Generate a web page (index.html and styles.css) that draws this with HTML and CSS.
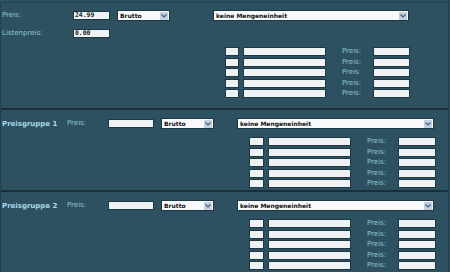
FILE: index.html
```html
<!DOCTYPE html>
<html>
<head>
<meta charset="utf-8">
<link rel="stylesheet" href="styles.css">
</head>
<body>
<div class="frame">
  <div class="section main">
    <div class="left">
      <div class="row r1">
        <span class="label lw-main">Preis:</span>
        <div class="inp w37"><span class="val">24.99</span></div>
        <div class="sel w53"><span class="stext">Brutto</span><span class="arrow"><svg width="6" height="4" viewBox="0 0 6 4"><path d="M0.5 0.5 L3 3 L5.5 0.5" fill="none" stroke="#3d5f86" stroke-width="1.2"/></svg></span></div>
      </div>
      <div class="row r2">
        <span class="label lw-main">Listenpreis:</span>
        <div class="inp w37"><span class="val">0.00</span></div>
      </div>
    </div>
    <div class="right">
      <div class="sel w196"><span class="stext">keine Mengeneinheit</span><span class="arrow"><svg width="6" height="4" viewBox="0 0 6 4"><path d="M0.5 0.5 L3 3 L5.5 0.5" fill="none" stroke="#3d5f86" stroke-width="1.2"/></svg></span></div>
      <div class="rows mt26">
        <div class="prow"><div class="inp s14"></div><div class="inp l83"></div><span class="label plabel">Preis:</span><div class="inp w37"></div></div>
        <div class="prow"><div class="inp s14"></div><div class="inp l83"></div><span class="label plabel">Preis:</span><div class="inp w37"></div></div>
        <div class="prow"><div class="inp s14"></div><div class="inp l83"></div><span class="label plabel">Preis:</span><div class="inp w37"></div></div>
        <div class="prow"><div class="inp s14"></div><div class="inp l83"></div><span class="label plabel">Preis:</span><div class="inp w37"></div></div>
        <div class="prow"><div class="inp s14"></div><div class="inp l83"></div><span class="label plabel">Preis:</span><div class="inp w37"></div></div>
      </div>
    </div>
  </div>
  <div class="sep"></div>
  <div class="section group">
    <div class="left gleft">
      <div class="row r1">
        <span class="title">Preisgruppe 1</span>
        <span class="label lw-grp">Preis:</span>
        <div class="inp w46"></div>
        <div class="sel w53"><span class="stext">Brutto</span><span class="arrow"><svg width="6" height="4" viewBox="0 0 6 4"><path d="M0.5 0.5 L3 3 L5.5 0.5" fill="none" stroke="#3d5f86" stroke-width="1.2"/></svg></span></div>
      </div>
    </div>
    <div class="right">
      <div class="sel w197"><span class="stext">keine Mengeneinheit</span><span class="arrow"><svg width="6" height="4" viewBox="0 0 6 4"><path d="M0.5 0.5 L3 3 L5.5 0.5" fill="none" stroke="#3d5f86" stroke-width="1.2"/></svg></span></div>
      <div class="rows mt8">
        <div class="prow"><div class="inp s15"></div><div class="inp l83"></div><span class="label plabel">Preis:</span><div class="inp w38"></div></div>
        <div class="prow"><div class="inp s15"></div><div class="inp l83"></div><span class="label plabel">Preis:</span><div class="inp w38"></div></div>
        <div class="prow"><div class="inp s15"></div><div class="inp l83"></div><span class="label plabel">Preis:</span><div class="inp w38"></div></div>
        <div class="prow"><div class="inp s15"></div><div class="inp l83"></div><span class="label plabel">Preis:</span><div class="inp w38"></div></div>
        <div class="prow"><div class="inp s15"></div><div class="inp l83"></div><span class="label plabel">Preis:</span><div class="inp w38"></div></div>
      </div>
    </div>
  </div>
  <div class="sep"></div>
  <div class="section group">
    <div class="left gleft">
      <div class="row r1">
        <span class="title">Preisgruppe 2</span>
        <span class="label lw-grp">Preis:</span>
        <div class="inp w46"></div>
        <div class="sel w53"><span class="stext">Brutto</span><span class="arrow"><svg width="6" height="4" viewBox="0 0 6 4"><path d="M0.5 0.5 L3 3 L5.5 0.5" fill="none" stroke="#3d5f86" stroke-width="1.2"/></svg></span></div>
      </div>
    </div>
    <div class="right">
      <div class="sel w197"><span class="stext">keine Mengeneinheit</span><span class="arrow"><svg width="6" height="4" viewBox="0 0 6 4"><path d="M0.5 0.5 L3 3 L5.5 0.5" fill="none" stroke="#3d5f86" stroke-width="1.2"/></svg></span></div>
      <div class="rows mt8">
        <div class="prow"><div class="inp s15"></div><div class="inp l83"></div><span class="label plabel">Preis:</span><div class="inp w38"></div></div>
        <div class="prow"><div class="inp s15"></div><div class="inp l83"></div><span class="label plabel">Preis:</span><div class="inp w38"></div></div>
        <div class="prow"><div class="inp s15"></div><div class="inp l83"></div><span class="label plabel">Preis:</span><div class="inp w38"></div></div>
        <div class="prow"><div class="inp s15"></div><div class="inp l83"></div><span class="label plabel">Preis:</span><div class="inp w38"></div></div>
        <div class="prow"><div class="inp s15"></div><div class="inp l83"></div><span class="label plabel">Preis:</span><div class="inp w38"></div></div>
      </div>
    </div>
  </div>
</div>
</body>
</html>
```
FILE: styles.css
```css
html, body {
  margin: 0;
  padding: 0;
}
body {
  background: #2e5162;
  font-family: "DejaVu Sans", Verdana, sans-serif;
  width: 450px;
  height: 272px;
  overflow: hidden;
}
.frame {
  margin-top: 2px;
  width: 449px;
  box-sizing: border-box;
  border-top: 1px dotted #1b3240;
  border-left: 1px dotted #1b3240;
  border-right: 1px dotted #1b3240;
}
.section {
  display: flex;
  align-items: flex-start;
  box-sizing: border-box;
}
.main {
  height: 105px;
  padding-top: 7px;
}
.group {
  height: 80px;
  padding-top: 8px;
}
.sep {
  height: 2px;
  background: #1a2f3b;
}
.left {
  width: 212px;
  display: flex;
  flex-direction: column;
}
.gleft {
  width: 236px;
}
.row {
  display: flex;
  align-items: center;
}
.r1 {
  height: 11px;
}
.r2 {
  height: 9px;
  margin-top: 8px;
}
.label {
  font-size: 7px;
  color: #8fc6d1;
  line-height: 9px;
  white-space: nowrap;
}
.lw-main {
  width: 71px;
  padding-left: 1px;
}
.lw-grp {
  width: 41px;
}
.title {
  width: 65px;
  padding-left: 1px;
  font-size: 7px;
  font-weight: bold;
  color: #a4dce7;
  white-space: nowrap;
}
.inp {
  box-sizing: border-box;
  height: 9px;
  background: #eef2f3;
  border: 1px solid #1d3744;
  display: flex;
  align-items: center;
}
.val {
  font-family: "DejaVu Sans Mono", monospace;
  font-weight: bold;
  font-size: 6.4px;
  color: #101820;
  padding-left: 1px;
  line-height: 7px;
}
.w37 { width: 37px; }
.w38 { width: 38px; }
.w46 { width: 46px; }
.s14 { width: 14px; }
.s15 { width: 15px; }
.l83 { width: 83px; margin-left: 4px; }
.sel {
  box-sizing: border-box;
  height: 11px;
  background: #f7f9fa;
  border: 1px solid #1d3744;
  display: flex;
  align-items: center;
  justify-content: space-between;
  margin-left: 7px;
}
.right .sel {
  margin-left: 0;
}
.w53 { width: 53px; }
.w196 { width: 196px; }
.w197 { width: 197px; }
.stext {
  font-size: 6px;
  font-weight: bold;
  color: #111;
  padding-left: 2px;
  line-height: 8px;
  white-space: nowrap;
}
.arrow {
  width: 8px;
  height: 8px;
  margin-right: 1px;
  background: #c3d1de;
  display: flex;
  align-items: center;
  justify-content: center;
}
.arrow svg {
  display: block;
}
.right {
  display: flex;
  flex-direction: column;
}
.rows {
  margin-left: 12px;
  display: flex;
  flex-direction: column;
  gap: 1.5px;
}
.mt26 { margin-top: 26px; }
.mt8 { margin-top: 8px; }
.prow {
  display: flex;
  align-items: center;
  height: 9px;
}
.plabel {
  margin-left: 16px;
  width: 31px;
}
```
